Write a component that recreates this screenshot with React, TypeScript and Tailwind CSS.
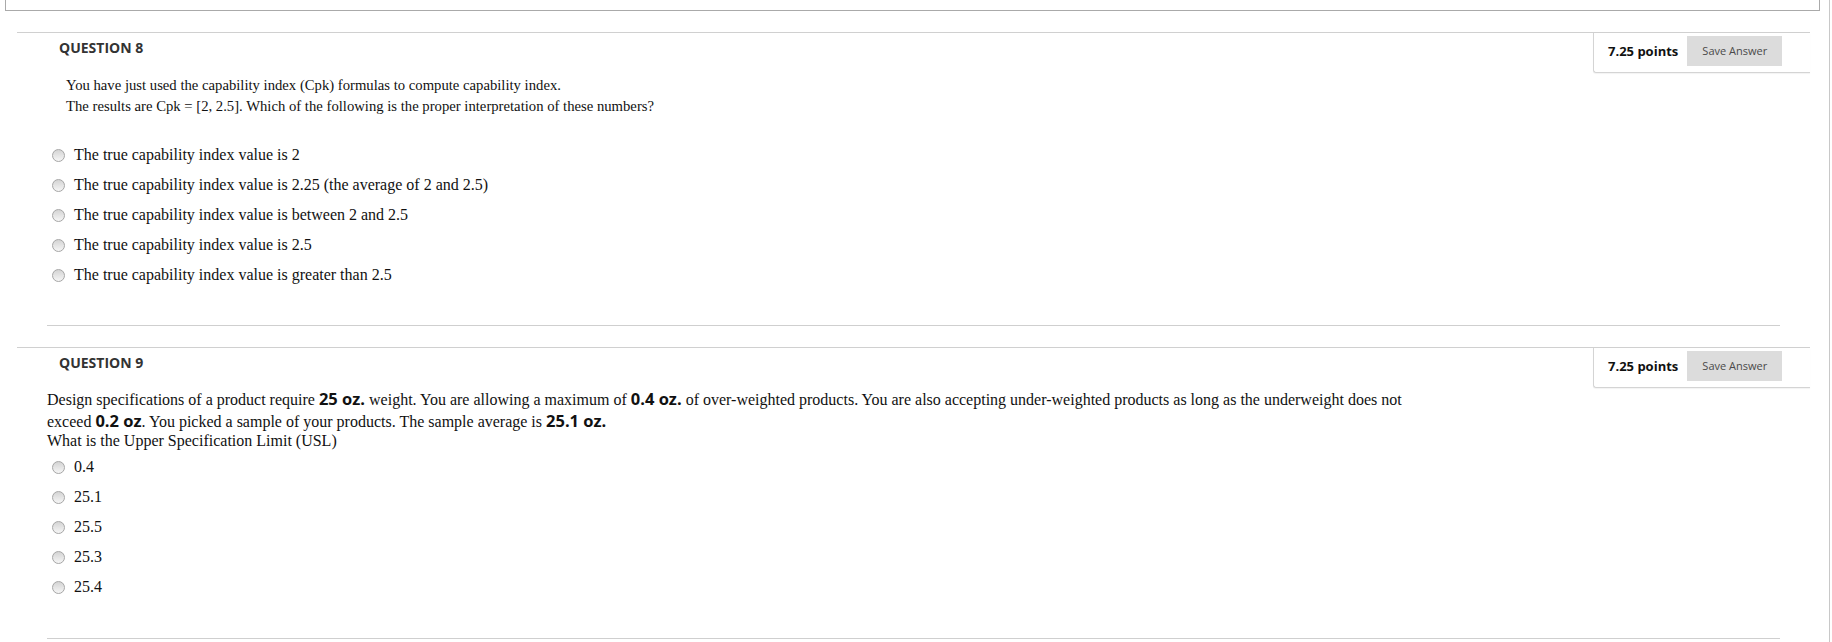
import React from "react";

function Radio() {
  return (
    <span className="inline-block w-[13px] h-[13px] rounded-full border border-[#a6a6a6] bg-gradient-to-b from-[#d4d4d4] to-[#f6f6f6] shrink-0" />
  );
}

function Header({ n }: { n: number }) {
  return (
    <div className="flex justify-between border-t border-[#d0d0d0]">
      <div className="pl-[42px] pt-[5px] text-[14px] leading-[19px] font-bold text-[#333] font-['Open_Sans',sans-serif]">
        QUESTION {n}
      </div>
      <div className="flex items-start gap-[9px] w-[217px] h-[40px] pl-[14px] pt-[3px] border-l border-b border-[#d4d4d4] rounded-bl-[3px] shadow-[0_1px_1px_rgba(0,0,0,0.05)]">
        <span className="text-[13px] font-bold text-[#111] leading-[30px] font-['Open_Sans',sans-serif]">
          7.25 points
        </span>
        <span className="w-[95px] h-[30px] bg-[#dcdcdc] text-[#4a4a4a] text-[11px] flex items-center justify-center font-['Open_Sans',sans-serif]">
          Save Answer
        </span>
      </div>
    </div>
  );
}

function Options({ items }: { items: string[] }) {
  return (
    <div className="flex flex-col pl-[35px] text-[16px]">
      {items.map((t) => (
        <label key={t} className="flex items-center gap-[9px] h-[30px]">
          <Radio />
          <span>{t}</span>
        </label>
      ))}
    </div>
  );
}

function B({ children }: { children: React.ReactNode }) {
  return <span className="font-bold text-[16.5px] font-['Open_Sans',sans-serif]">{children}</span>;
}

export default function App() {
  return (
    <div className="flex w-[1832px] h-[642px] bg-white overflow-hidden font-['Liberation_Serif',serif] text-[#111]">
      <div className="w-[1829px] flex flex-col">
        <div className="ml-[5px] mr-[9px] h-[11px] border-l border-r border-b border-[#aaa]" />
        <div className="ml-[17px] w-[1793px] mt-[21px]">
          <Header n={8} />
          <div className="pl-[49px] pt-[2px] text-[14.7px] leading-[21px]">
            <p>You have just used the capability index (Cpk) formulas to compute capability index.</p>
            <p>The results are Cpk = [2, 2.5]. Which of the following is the proper interpretation of these numbers?</p>
          </div>
          <div className="mt-[23px]">
            <Options
              items={[
                "The true capability index value is 2",
                "The true capability index value is 2.25 (the average of 2 and 2.5)",
                "The true capability index value is between 2 and 2.5",
                "The true capability index value is 2.5",
                "The true capability index value is greater than 2.5",
              ]}
            />
          </div>
          <div className="mx-[30px] mt-[35px] border-t border-[#cfcfcf]" />
        </div>
        <div className="ml-[17px] w-[1793px] mt-[21px]">
          <Header n={9} />
          <div className="pl-[30px] text-[16px]">
            <p className="leading-[21px]">
              Design specifications of a product require <B>25 oz.</B> weight. You are allowing a maximum of <B>0.4 oz.</B> of
              over-weighted products. You are also accepting under-weighted products as long as the underweight does not
              <br />
              exceed <B>0.2 oz</B>. You picked a sample of your products. The sample average is <B>25.1 oz.</B>
            </p>
            <p className="mt-[1px] leading-[16px]">What is the Upper Specification Limit (USL)</p>
          </div>
          <div className="mt-[3px]">
            <Options items={["0.4", "25.1", "25.5", "25.3", "25.4"]} />
          </div>
          <div className="mx-[30px] mt-[36px] border-t border-[#cfcfcf]" />
        </div>
      </div>
      <div className="w-px h-full bg-[#c8c8c8]" />
    </div>
  );
}
